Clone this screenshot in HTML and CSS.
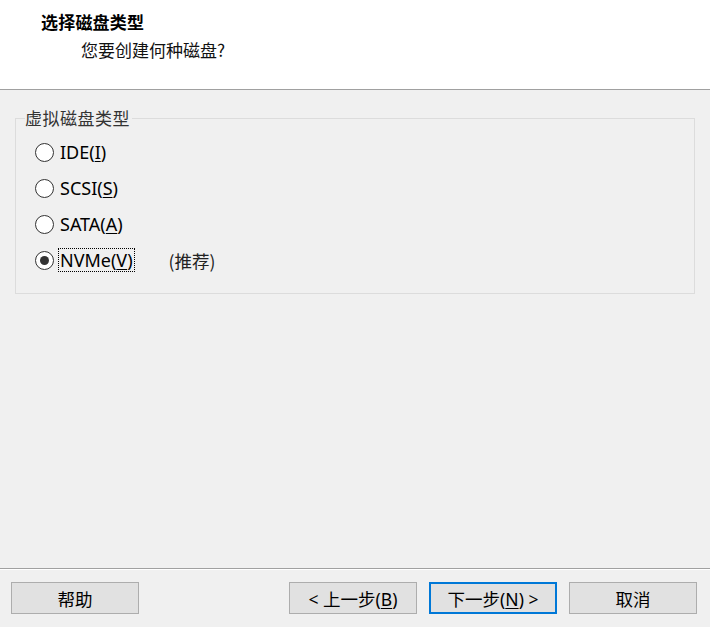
FILE: index.html
```html
<!DOCTYPE html>
<html lang="zh-CN">
<head>
<meta charset="utf-8">
<title>选择磁盘类型</title>
<link rel="stylesheet" href="styles.css">
</head>
<body>
<div class="dialog">
  <header class="header">
    <div class="title">选择磁盘类型</div>
    <div class="subtitle">您要创建何种磁盘?</div>
  </header>
  <main class="main">
    <fieldset class="group">
      <legend class="legend">虚拟磁盘类型</legend>
      <div class="row"><span class="radio"></span><span class="label">IDE(<u>I</u>)</span></div>
      <div class="row"><span class="radio"></span><span class="label">SCSI(<u>S</u>)</span></div>
      <div class="row"><span class="radio"></span><span class="label">SATA(<u>A</u>)</span></div>
      <div class="row"><span class="radio checked"></span><span class="label focus">NVMe(<u>V</u>)</span><span class="note">(推荐)</span></div>
    </fieldset>
  </main>
  <footer class="footer">
    <button class="btn">帮助</button>
    <div class="spacer"></div>
    <button class="btn">&lt; 上一步(<u>B</u>)</button>
    <button class="btn default">下一步(<u>N</u>) &gt;</button>
    <button class="btn">取消</button>
  </footer>
</div>
</body>
</html>
```
FILE: styles.css
```css
* { box-sizing: border-box; }
html, body { margin: 0; padding: 0; }
body {
  width: 710px;
  height: 627px;
  background: #f0f0f0;
  font-family: "Noto Sans", "Noto Sans CJK SC", sans-serif;
  font-size: 16px;
  color: #000;
  overflow: hidden;
}
.dialog {
  display: flex;
  flex-direction: column;
  height: 627px;
}
.header {
  height: 90px;
  background: #fff;
  border-bottom: 1px solid #a0a0a0;
  padding: 10px 0 0 41px;
}
.title {
  font-family: "Noto Sans CJK SC", sans-serif;
  font-weight: bold;
  font-size: 17px;
  letter-spacing: 0.2px;
  line-height: 24px;
}
.subtitle {
  font-family: "Noto Sans CJK SC", sans-serif;
  font-size: 17px;
  letter-spacing: 0;
  line-height: 24px;
  margin-top: 4px;
  padding-left: 40px;
  color: #111;
}
.main {
  flex: 1;
  padding: 18px 15px 0 15px;
}
.group {
  margin: 0;
  border: 1px solid #dcdcdc;
  padding: 6px 0 15px 19px;
  min-width: 0;
}
.legend {
  font-family: "Noto Sans CJK SC", sans-serif;
  font-size: 17px;
  letter-spacing: 0.5px;
  line-height: 20px;
  padding: 0 2px 0 0;
  margin-left: -10px;
  color: #333;
}
.row {
  height: 36px;
  display: flex;
  align-items: center;
}
.radio {
  width: 19px;
  height: 19px;
  border: 1px solid #333;
  border-radius: 50%;
  background: #fff;
  display: flex;
  align-items: center;
  justify-content: center;
  flex: none;
}
.radio.checked::after {
  content: "";
  width: 9px;
  height: 9px;
  border-radius: 50%;
  background: #333;
}
.label {
  margin-left: 4px;
  font-size: 18px;
  line-height: 22px;
  padding: 0 1px;
  border: 1px solid transparent;
}
.label.focus {
  border: 1px dotted #000;
}
.note {
  margin-left: 34px;
  font-family: "Noto Sans CJK SC", sans-serif;
  font-size: 17.5px;
  color: #222;
}
u { text-underline-offset: 2px; }
.footer {
  height: 59px;
  border-top: 1px solid #a0a0a0;
  box-shadow: inset 0 1px 0 #fff;
  display: flex;
  align-items: flex-start;
  padding: 13px 13px 0 11px;
  gap: 12px;
}
.spacer { flex: 1; }
.btn {
  width: 128px;
  height: 32px;
  background: #e1e1e1;
  border: 1px solid #adadad;
  font-family: "Noto Sans", "Noto Sans CJK SC", sans-serif;
  font-size: 17.5px;
  color: #000;
  padding: 0;
}
.btn.default {
  border: 2px solid #0078d7;
}
```
